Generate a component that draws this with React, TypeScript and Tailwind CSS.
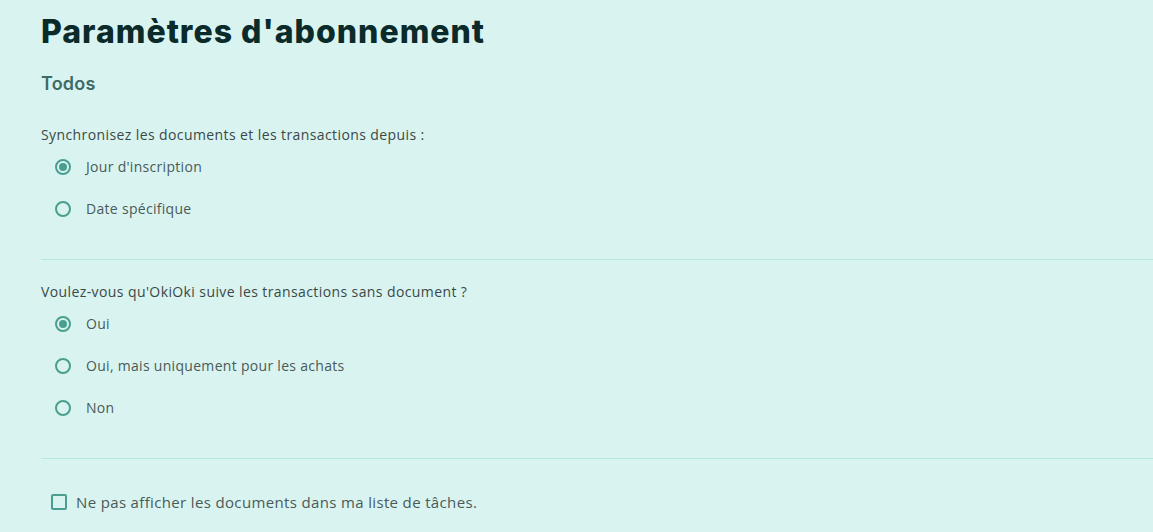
import React from "react";

const Radio = ({ checked, label }: { checked?: boolean; label: string }) => (
  <div className="flex h-[42px] items-center">
    <div className="ml-[14px] flex h-[16px] w-[16px] items-center justify-center rounded-full border-2 border-[#4a9e90]">
      {checked && <div className="h-[8px] w-[8px] rounded-full bg-[#4a9e90]" />}
    </div>
    <span className="ml-[15px] text-[14px] leading-5 tracking-[0.3px] text-[#4a5a59]">{label}</span>
  </div>
);

export default function App() {
  return (
    <div className="min-h-[532px] w-full bg-[#d9f4f0] pl-[41px] font-['Open_Sans',sans-serif]">
      <h1 className="pt-[12px] text-[32px] font-extrabold leading-[40px] tracking-[1px] text-[#0b2a2a] font-['Inter',sans-serif]">
        Paramètres d'abonnement
      </h1>
      <h2 className="mt-[18px] text-[18px] font-semibold leading-[28px] tracking-[0.2px] text-[#3e6b66] font-['Inter',sans-serif]">
        Todos
      </h2>
      <p className="mt-[27px] text-[14px] leading-5 tracking-[0.4px] text-[#3b4847]">
        Synchronisez les documents et les transactions depuis :
      </p>
      <div className="mt-[1px]">
        <Radio checked label="Jour d'inscription" />
        <Radio label="Date spécifique" />
      </div>
      <div className="mt-[29px] h-px bg-[#b5e8dd]" />
      <p className="mt-[22px] text-[14px] leading-5 tracking-[0.4px] text-[#3b4847]">
        Voulez-vous qu'OkiOki suive les transactions sans document ?
      </p>
      <div className="mt-[1px]">
        <Radio checked label="Oui" />
        <Radio label="Oui, mais uniquement pour les achats" />
        <Radio label="Non" />
      </div>
      <div className="mt-[29px] h-px bg-[#b5e8dd]" />
      <div className="mt-[33px] flex h-5 items-center">
        <div className="ml-[10px] h-[16px] w-[16px] rounded-[2px] border-2 border-[#4a9e90]" />
        <span className="ml-[9px] text-[15px] leading-5 tracking-[0.35px] text-[#4a5a59]">
          Ne pas afficher les documents dans ma liste de tâches.
        </span>
      </div>
    </div>
  );
}
